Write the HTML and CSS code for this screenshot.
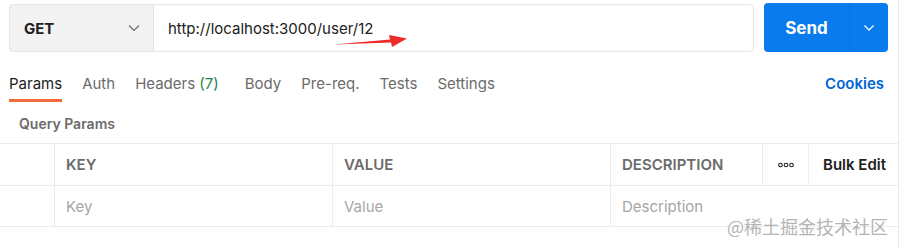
FILE: index.html
```html
<!DOCTYPE html>
<html lang="en">
<head>
  <meta charset="UTF-8">
  <title>Request</title>
  <link rel="stylesheet" href="styles.css">
</head>
<body>
  <div class="app">
    <div class="request-bar">
      <div class="method">
        <span>GET</span>
        <svg class="chevron" width="12" height="8" viewBox="0 0 12 8"><path d="M1 1.5l5 5 5-5" fill="none" stroke="#6b6b6b" stroke-width="1.2"/></svg>
      </div>
      <div class="url">
        <span>http://localhost:3000/user/12</span>
        <svg class="arrow" width="76" height="16" viewBox="0 0 76 16"><path d="M0 10.5 L56 5.5 L55 1 L73 4.5 L58 13 L57 8.5 Z" fill="#ee2a2a"/></svg>
      </div>
      <div class="send">
        <span class="send-label">Send</span>
        <span class="send-more">
          <svg width="12" height="8" viewBox="0 0 12 8"><path d="M1.5 1.5l4.5 4.5 4.5-4.5" fill="none" stroke="#fff" stroke-width="1.3"/></svg>
        </span>
      </div>
    </div>

    <div class="tabs">
      <div class="tab active">Params</div>
      <div class="tab">Auth</div>
      <div class="tab headers">Headers <span class="count">(7)</span></div>
      <div class="tab">Body</div>
      <div class="tab">Pre-req.</div>
      <div class="tab">Tests</div>
      <div class="tab">Settings</div>
      <div class="cookies">Cookies</div>
    </div>

    <div class="section-title">Query Params</div>

    <div class="params">
      <div class="row head">
        <div class="cell check"></div>
        <div class="cell key">KEY</div>
        <div class="cell value">VALUE</div>
        <div class="cell desc">DESCRIPTION</div>
        <div class="cell more">
          <svg width="16" height="6" viewBox="0 0 16 6"><g fill="none" stroke="#212121" stroke-width="1.1"><circle cx="2.5" cy="3" r="1.8"/><circle cx="8" cy="3" r="1.8"/><circle cx="13.5" cy="3" r="1.8"/></g></svg>
        </div>
        <div class="cell bulk">Bulk Edit</div>
      </div>
      <div class="row">
        <div class="cell check"></div>
        <div class="cell key placeholder">Key</div>
        <div class="cell value placeholder">Value</div>
        <div class="cell desc-wide placeholder">Description</div>
      </div>
    </div>

    <div class="watermark">@稀土掘金技术社区</div>
  </div>
</body>
</html>
```

FILE: styles.css
```css
body {
  margin: 0;
  background: #fff;
  font-family: Inter, 'Noto Sans', sans-serif;
  color: #212121;
}
.app {
  position: relative;
  width: 898px;
  height: 249px;
  border-right: 1px solid #e8e8e8;
  overflow: hidden;
}
.request-bar {
  display: flex;
  padding: 4px 0 0 9px;
  height: 48px;
}
.method {
  width: 144px;
  box-sizing: border-box;
  display: flex;
  align-items: center;
  justify-content: space-between;
  padding: 0 13px 0 14px;
  background: #f2f2f2;
  border: 1px solid #e6e6e6;
  border-right: none;
  border-radius: 4px 0 0 4px;
  font-size: 15px;
  font-weight: 700;
}
.url {
  position: relative;
  width: 601px;
  box-sizing: border-box;
  display: flex;
  align-items: center;
  padding-left: 14px;
  border: 1px solid #e6e6e6;
  border-radius: 0 4px 4px 0;
  font-size: 15px;
  color: #212121;
}
.arrow {
  position: absolute;
  left: 180px;
  top: 29px;
}
.send {
  display: flex;
  margin-left: 10px;
  width: 124px;
  margin-top: -1px;
  height: 49px;
  background: #097bed;
  border-radius: 4px;
  color: #fff;
}
.send-label {
  width: 85px;
  display: flex;
  align-items: center;
  justify-content: center;
  font-size: 17px;
  font-weight: 700;
  border-right: 1px solid #0a6fd6;
}
.send-more {
  flex: 1;
  display: flex;
  align-items: center;
  justify-content: center;
}
.tabs {
  display: flex;
  align-items: stretch;
  margin-top: 13px;
  padding: 0 14px 0 9px;
  height: 37px;
  font-size: 15px;
}
.tab {
  margin-right: 20px;
  color: #6b6b6b;
  padding-top: 9px;
  box-sizing: border-box;
  border-bottom: 3px solid transparent;
}
.tab.active {
  color: #212121;
  border-bottom-color: #f26b3a;
}
.tab.headers {
  margin-right: 26px;
}
.count {
  color: #1e8551;
}
.cookies {
  margin-left: auto;
  padding-top: 9px;
  color: #0265d2;
  font-weight: 600;
}
.section-title {
  padding: 13px 0 0 19px;
  height: 28px;
  font-size: 14px;
  font-weight: 600;
  color: #6b6b6b;
}
.params {
  border-top: 1px solid #ececec;
}
.row {
  display: flex;
  height: 41px;
  border-bottom: 1px solid #ececec;
}
.row + .row {
  height: 40px;
}
.cell {
  box-sizing: border-box;
  display: flex;
  align-items: center;
  padding-left: 11px;
  font-size: 15px;
  border-right: 1px solid #ececec;
}
.head .cell {
  font-weight: 600;
  color: #6b6b6b;
}
.check {
  width: 55px;
}
.key,
.value {
  width: 278px;
}
.desc {
  width: 152px;
}
.desc-wide {
  flex: 1;
  border-right: none;
}
.more {
  width: 46px;
  justify-content: center;
  padding-left: 0;
}
.head .bulk {
  flex: 1;
  border-right: none;
  padding-left: 14px;
  color: #212121;
}
.placeholder {
  color: #a6a6a6;
  font-weight: 400;
}
.watermark {
  position: absolute;
  left: 727px;
  top: 213px;
  font-family: 'Noto Sans CJK SC', sans-serif;
  font-size: 18px;
  color: #b4b4b4;
}
```
